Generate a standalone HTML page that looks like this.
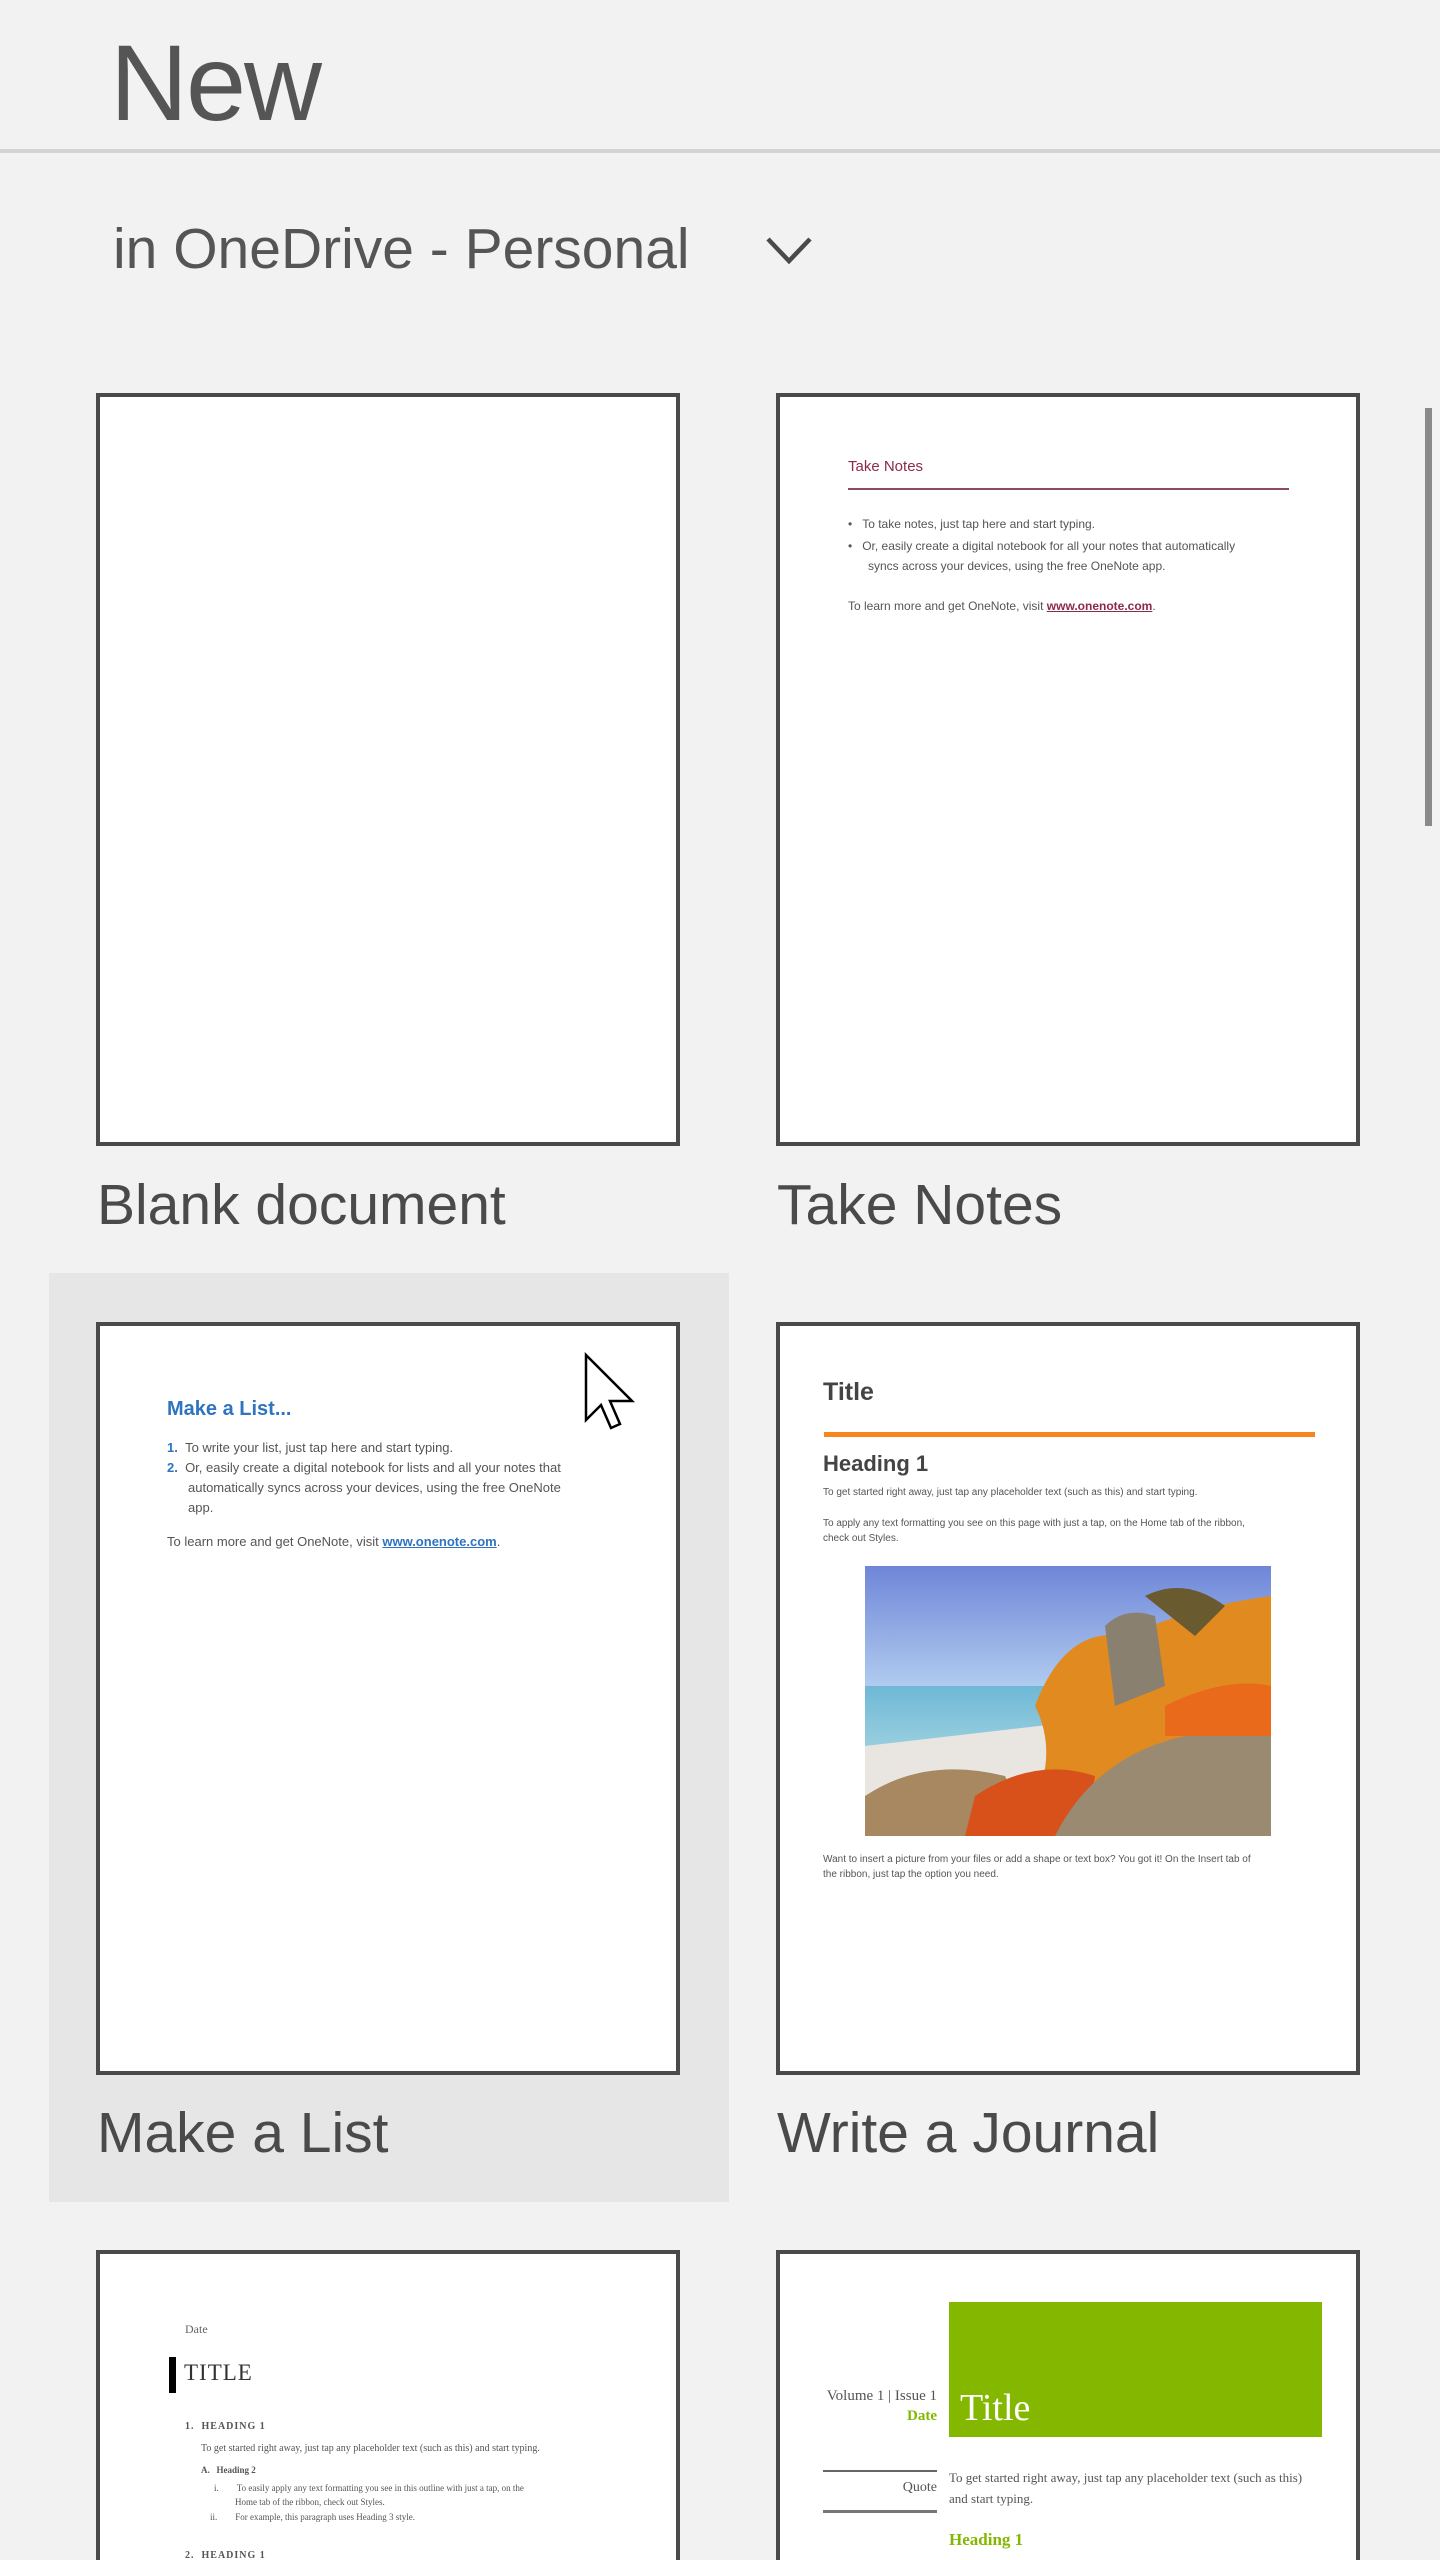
<!DOCTYPE html>
<html style="width:1440px;height:2560px;overflow:hidden"><head><meta charset="utf-8"><style>
*{margin:0;padding:0;box-sizing:border-box}
body{width:1440px;height:2560px;background:#f2f2f2;position:relative;overflow:hidden;font-family:"Liberation Sans",sans-serif;color:#444}
.a{position:absolute;white-space:nowrap}
.card{position:absolute;background:#fff;border:4px solid #4a4a4a}
.lbl{position:absolute;font-size:57px;color:#4a4a4a;white-space:nowrap}
.s{position:absolute;white-space:nowrap;font-size:12px;color:#555}
.sf{font-family:"Liberation Serif",serif}
</style></head><body>
<div class="a" style="left:110px;top:20px;font-size:108px;font-weight:300;color:#555;letter-spacing:-2px">New</div>
<div class="a" style="left:0;top:149px;width:1440px;height:4px;background:#d4d4d4"></div>
<div class="a" style="left:113px;top:216px;font-size:57px;color:#555">in OneDrive - Personal</div>
<svg class="a" style="left:760px;top:230px" width="60" height="40"><path d="M8 9 L29 31 L50 9" fill="none" stroke="#4a4a4a" stroke-width="4.5"/></svg>
<div class="a" style="left:1425px;top:408px;width:7px;height:418px;background:#8a8a8a"></div>

<!-- row1 -->
<div class="card" style="left:96px;top:393px;width:584px;height:753px"></div>
<div class="lbl" style="left:97px;top:1172px">Blank document</div>
<div class="card" style="left:776px;top:393px;width:584px;height:753px"></div>
<div class="s" style="left:848px;top:458px;font-size:15px;color:#8b2a4e">Take Notes</div>
<div class="a" style="left:848px;top:488px;width:441px;height:2px;background:#8b4a66"></div>
<div class="s" style="left:848px;top:517px">•&nbsp;&nbsp;&nbsp;To take notes, just tap here and start typing.</div>
<div class="s" style="left:848px;top:539px">•&nbsp;&nbsp;&nbsp;Or, easily create a digital notebook for all your notes that automatically</div>
<div class="s" style="left:868px;top:559px">syncs across your devices, using the free OneNote app.</div>
<div class="s" style="left:848px;top:599px">To learn more and get OneNote, visit <u style="color:#8b2a4e;font-weight:bold">www.onenote.com</u>.</div>
<div class="lbl" style="left:777px;top:1172px">Take Notes</div>

<!-- row2 -->
<div class="a" style="left:49px;top:1273px;width:680px;height:929px;background:#e6e6e6"></div>
<div class="card" style="left:96px;top:1322px;width:584px;height:753px"></div>
<div class="s" style="left:167px;top:1398px;font-size:20px;font-weight:bold;color:#2e74c0">Make a List...</div>
<div class="s" style="left:167px;top:1440px;font-size:13px"><b style="color:#2e74c0">1.</b>&nbsp;&nbsp;To write your list, just tap here and start typing.</div>
<div class="s" style="left:167px;top:1460px;font-size:13px"><b style="color:#2e74c0">2.</b>&nbsp;&nbsp;Or, easily create a digital notebook for lists and all your notes that</div>
<div class="s" style="left:188px;top:1480px;font-size:13px">automatically syncs across your devices, using the free OneNote</div>
<div class="s" style="left:188px;top:1500px;font-size:13px">app.</div>
<div class="s" style="left:167px;top:1534px;font-size:13px">To learn more and get OneNote, visit <u style="color:#2e74c0;font-weight:bold">www.onenote.com</u>.</div>
<svg class="a" style="left:582px;top:1352px" width="56" height="80"><path d="M4 3 L4 68 L19 53 L29 76 L38 72 L28 49 L50 49 Z" fill="#fff" stroke="#000" stroke-width="2.5" stroke-linejoin="miter"/></svg>
<div class="lbl" style="left:97px;top:2100px">Make a List</div>

<div class="card" style="left:776px;top:1322px;width:584px;height:753px"></div>
<div class="s" style="left:823px;top:1378px;font-size:25px;font-weight:bold;color:#444">Title</div>
<div class="a" style="left:824px;top:1432px;width:491px;height:5px;background:#f7841d"></div>
<div class="s" style="left:823px;top:1451px;font-size:22px;font-weight:bold;color:#444">Heading 1</div>
<div class="s" style="left:823px;top:1487px;font-size:10px">To get started right away, just tap any placeholder text (such as this) and start typing.</div>
<div class="s" style="left:823px;top:1518px;font-size:10px">To apply any text formatting you see on this page with just a tap, on the Home tab of the ribbon,</div>
<div class="s" style="left:823px;top:1533px;font-size:10px">check out Styles.</div>
<svg class="a" style="left:865px;top:1566px" width="406" height="270" viewBox="0 0 406 270">
<defs><linearGradient id="sky" x1="0" y1="0" x2="0" y2="1"><stop offset="0" stop-color="#6f86d8"/><stop offset="0.5" stop-color="#b8d4f2"/><stop offset="1" stop-color="#d8e8f5"/></linearGradient>
<linearGradient id="sea" x1="0" y1="0" x2="0" y2="1"><stop offset="0" stop-color="#6fb8d6"/><stop offset="1" stop-color="#9fd2e0"/></linearGradient></defs>
<rect width="406" height="270" fill="url(#sky)"/>
<rect x="0" y="120" width="260" height="70" fill="url(#sea)"/>
<path d="M0 180 L260 150 L300 200 L0 230 Z" fill="#e9e6e2"/>
<path d="M170 140 Q200 60 260 70 Q330 40 406 30 L406 270 L150 270 Q200 200 170 140Z" fill="#e08a20"/>
<path d="M240 60 Q260 40 290 50 L300 120 L250 140 Z" fill="#8a8070"/>
<path d="M280 30 Q320 10 360 40 L330 70 Z" fill="#6a5a30"/>
<path d="M0 230 Q60 190 140 210 L170 270 L0 270Z" fill="#a88860"/>
<path d="M110 230 Q170 190 230 210 L220 270 L100 270Z" fill="#d8501a"/>
<path d="M190 270 Q230 190 320 170 Q380 160 406 170 L406 270Z" fill="#9a8a72"/>
<path d="M300 140 Q360 110 406 120 L406 170 L300 170Z" fill="#e86a1a"/>
</svg>
<div class="s" style="left:823px;top:1854px;font-size:10px">Want to insert a picture from your files or add a shape or text box? You got it! On the Insert tab of</div>
<div class="s" style="left:823px;top:1869px;font-size:10px">the ribbon, just tap the option you need.</div>
<div class="lbl" style="left:777px;top:2100px">Write a Journal</div>

<!-- row3 -->
<div class="card" style="left:96px;top:2250px;width:584px;height:310px;border-bottom:none"></div>
<div class="s sf" style="left:185px;top:2322px;font-size:12px;color:#666">Date</div>
<div class="a" style="left:169px;top:2357px;width:7px;height:36px;background:#000"></div>
<div class="s sf" style="left:184px;top:2360px;font-size:23px;color:#333;letter-spacing:1px">TITLE</div>
<div class="s sf" style="left:185px;top:2421px;font-size:10px;font-weight:bold;letter-spacing:1px">1.&nbsp;&nbsp;HEADING 1</div>
<div class="s sf" style="left:201px;top:2443px;font-size:10px">To get started right away, just tap any placeholder text (such as this) and start typing.</div>
<div class="s sf" style="left:201px;top:2465px;font-size:9px;font-weight:bold">A.&nbsp;&nbsp;&nbsp;Heading 2</div>
<div class="s sf" style="left:214px;top:2483px;font-size:9px">i.&nbsp;&nbsp;&nbsp;&nbsp;&nbsp;&nbsp;&nbsp;&nbsp;To easily apply any text formatting you see in this outline with just a tap, on the</div>
<div class="s sf" style="left:235px;top:2497px;font-size:9px">Home tab of the ribbon, check out Styles.</div>
<div class="s sf" style="left:210px;top:2512px;font-size:9px">ii.&nbsp;&nbsp;&nbsp;&nbsp;&nbsp;&nbsp;&nbsp;&nbsp;For example, this paragraph uses Heading 3 style.</div>
<div class="s sf" style="left:185px;top:2550px;font-size:10px;font-weight:bold;letter-spacing:1px">2.&nbsp;&nbsp;HEADING 1</div>

<div class="card" style="left:776px;top:2250px;width:584px;height:310px;border-bottom:none"></div>
<div class="a" style="left:949px;top:2302px;width:373px;height:135px;background:#84b800"></div>
<div class="s sf" style="left:960px;top:2386px;font-size:38px;color:#fff">Title</div>
<div class="s sf" style="right:503px;top:2388px;font-size:15px;color:#555;text-align:right">Volume 1 | Issue 1</div>
<div class="s sf" style="right:503px;top:2408px;font-size:15px;font-weight:bold;color:#84b800">Date</div>
<div class="a" style="left:823px;top:2470px;width:114px;height:2px;background:#666"></div>
<div class="a" style="left:823px;top:2510px;width:114px;height:3px;background:#777"></div>
<div class="s sf" style="right:503px;top:2480px;font-size:14px;color:#555">Quote</div>
<div class="s sf" style="left:949px;top:2470px;font-size:13px;color:#555">To get started right away, just tap any placeholder text (such as this)</div>
<div class="s sf" style="left:949px;top:2491px;font-size:13px;color:#555">and start typing.</div>
<div class="s sf" style="left:949px;top:2530px;font-size:17px;font-weight:bold;color:#84b800">Heading 1</div>
</body></html>
